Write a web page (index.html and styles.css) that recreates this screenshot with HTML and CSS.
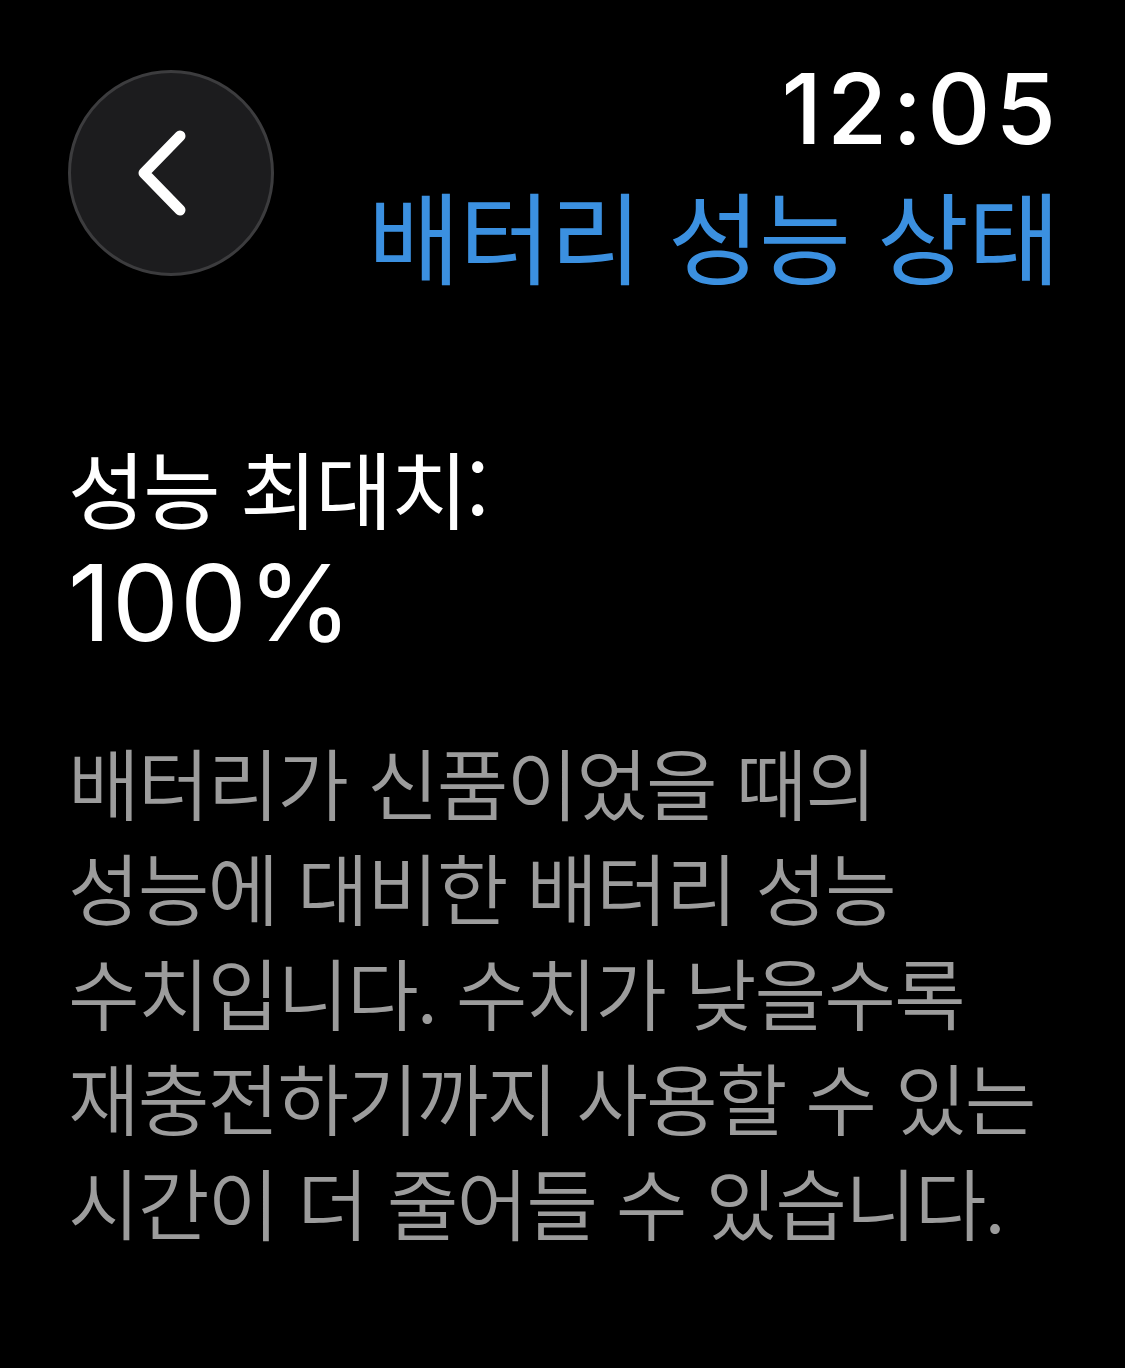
FILE: index.html
```html
<!DOCTYPE html>
<html lang="ko">
<head>
    <meta charset="UTF-8">
    <meta name="viewport" content="width=device-width, initial-scale=1.0">
    <title>배터리 성능 상태</title>
    <link rel="stylesheet" href="styles.css">
</head>
<body>
    <div class="screen">
        <header class="top-bar">
            <button class="back-btn" aria-label="뒤로">
                <svg width="60" height="90" viewBox="0 0 60 90">
                    <path d="M46 8 L10 45 L46 82" fill="none" stroke="#fff" stroke-width="11" stroke-linecap="round" stroke-linejoin="round"/>
                </svg>
            </button>
            <div class="heading">
                <div class="clock">12:05</div>
                <h1 class="title">배터리 성능 상태</h1>
            </div>
        </header>

        <section class="capacity">
            <div class="capacity-label">성능 최대치:</div>
            <div class="capacity-value">100%</div>
        </section>

        <p class="note">
            배터리가 신품이었을 때의<br>
            성능에 대비한 배터리 성능<br>
            수치입니다. 수치가 낮을수록<br>
            재충전하기까지 사용할 수 있는<br>
            시간이 더 줄어들 수 있습니다.
        </p>
    </div>
</body>
</html>
```

FILE: styles.css
```css
body {
    margin: 0;
    padding: 0;
    background-color: #000;
    font-family: "Noto Sans CJK KR", "Noto Sans", sans-serif;
    color: #fff;
}

.screen {
    width: 1125px;
    height: 1368px;
    box-sizing: border-box;
    padding: 70px 73px 0 68px;
    overflow: hidden;
}

.top-bar {
    display: flex;
    justify-content: space-between;
    align-items: flex-start;
}

.back-btn {
    width: 206px;
    height: 206px;
    border-radius: 50%;
    background-color: #1c1c1e;
    border: 3px solid #3c3c3e;
    box-sizing: border-box;
    display: flex;
    align-items: center;
    justify-content: center;
    padding: 0 14px 0 0;
    cursor: pointer;
}

.heading {
    display: flex;
    flex-direction: column;
    align-items: flex-end;
}

.clock {
    font-family: Inter, "Noto Sans", sans-serif;
    font-size: 98px;
    font-weight: 500;
    line-height: 1;
    letter-spacing: 5px;
    margin: -10px -9px 0 0;
}

.title {
    margin: 21px -7px 0 0;
    font-size: 100px;
    font-weight: 400;
    line-height: 1.1;
    letter-spacing: -1px;
    color: #3b90e0;
}

.capacity {
    margin-top: 156px;
}

.capacity-label {
    font-size: 84px;
    line-height: 1;
    letter-spacing: -2px;
}

.capacity-value {
    margin-top: 21px;
    font-family: Inter, "Noto Sans", sans-serif;
    font-size: 106px;
    line-height: 1;
    letter-spacing: 1px;
}

.note {
    margin: 73px 0 0;
    font-size: 78px;
    font-weight: 350;
    line-height: 105px;
    letter-spacing: -2px;
    color: #9c9c9c;
}
```
